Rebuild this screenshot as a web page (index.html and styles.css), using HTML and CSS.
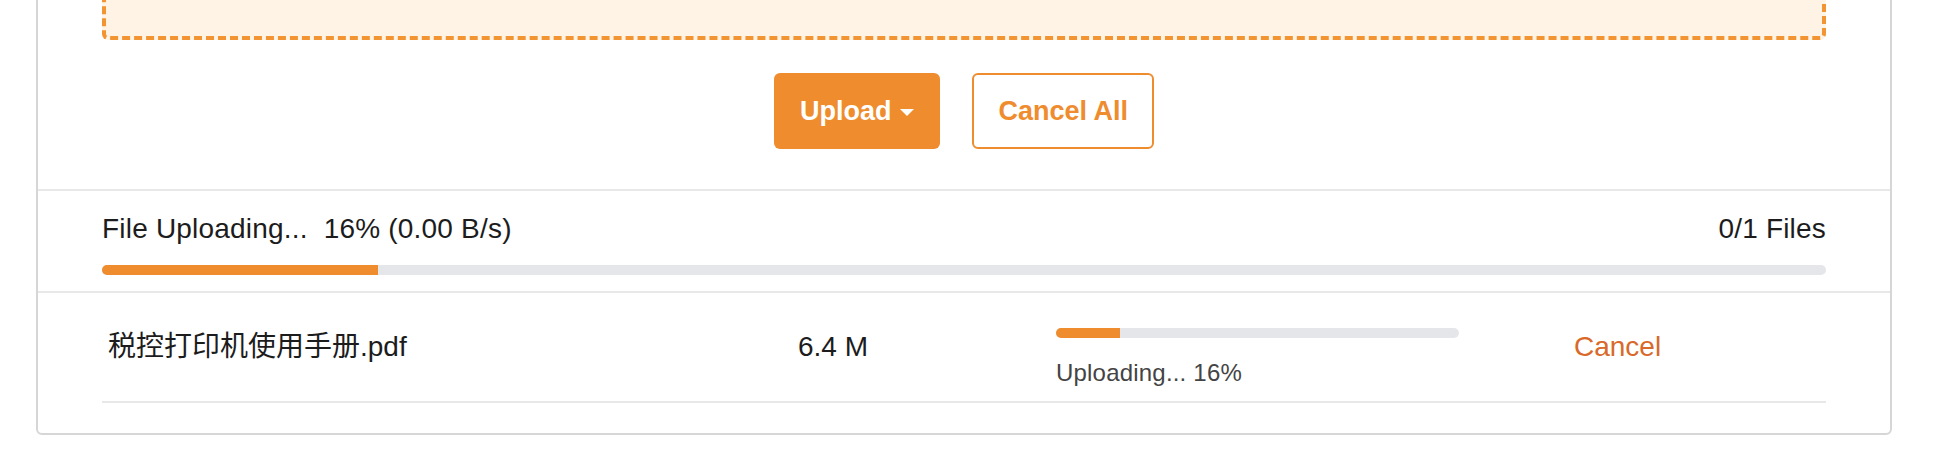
FILE: index.html
```html
<!DOCTYPE html>
<html lang="zh-CN">
<head>
<meta charset="utf-8">
<title>Upload</title>
<link rel="stylesheet" href="styles.css">
</head>
<body>
<div class="card">
  <div class="top">
    <div class="dropzone"></div>
    <div class="actions">
      <button class="btn btn-primary">Upload<span class="caret"></span></button>
      <button class="btn btn-outline">Cancel All</button>
    </div>
  </div>
  <div class="status">
    <div class="status-line">
      <span>File Uploading...&nbsp; 16% (0.00 B/s)</span>
      <span>0/1 Files</span>
    </div>
    <div class="bar bar-total"><div class="fill" style="width:16%"></div></div>
  </div>
  <div class="files">
    <div class="row">
      <div class="cell name">税控打印机使用手册.pdf</div>
      <div class="cell size">6.4 M</div>
      <div class="cell progress">
        <div class="bar bar-small"><div class="fill" style="width:16%"></div></div>
        <div class="progress-text">Uploading... 16%</div>
      </div>
      <div class="cell action"><a class="cancel">Cancel</a></div>
    </div>
  </div>
</div>
</body>
</html>
```
FILE: styles.css
```css
html, body {
  margin: 0;
  padding: 0;
  background: #ffffff;
  overflow: hidden;
}
body {
  font-family: "Liberation Sans", "Noto Sans CJK SC", Arial, sans-serif;
  color: #1c1c1c;
}
.card {
  margin: -100px 0 0 36px;
  width: 1856px;
  box-sizing: border-box;
  border: 2px solid #d6d6d6;
  border-radius: 6px;
  background: #fff;
}
.top {
  padding: 40px 64px 40px 64px;
}
.dropzone {
  height: 90px;
  background: #fff3e6;
  border: 4px dashed #f39433;
  border-radius: 6px;
}
.actions {
  display: flex;
  justify-content: center;
  gap: 32px;
  margin-top: 33px;
}
.btn {
  height: 76px;
  display: inline-flex;
  align-items: center;
  box-sizing: border-box;
  border-radius: 6px;
  font-family: "Liberation Sans", Arial, sans-serif;
  font-weight: bold;
  font-size: 27px;
  cursor: pointer;
}
.btn-primary {
  background: #ee8c2e;
  border: none;
  color: #fff;
  padding: 0 26px;
}
.caret {
  width: 0;
  height: 0;
  margin-left: 9px;
  margin-top: 3px;
  border-left: 7px solid transparent;
  border-right: 7px solid transparent;
  border-top: 7px solid #fff;
}
.btn-outline {
  background: #fff;
  border: 2px solid #ee8c2e;
  color: #ee8c2e;
  padding: 0 24px;
}
.status {
  border-top: 2px solid #e8e8e8;
  padding: 22px 64px 16px 64px;
}
.status-line {
  display: flex;
  justify-content: space-between;
  font-size: 28px;
  line-height: 32px;
  letter-spacing: 0.2px;
}
.bar {
  background: #e5e6ea;
  border-radius: 5px;
  height: 10px;
  overflow: hidden;
}
.bar-total {
  margin-top: 20px;
}
.fill {
  height: 100%;
  background: #ee8c2e;
}
.files {
  border-top: 2px solid #e8e8e8;
  padding: 0 64px 30px 64px;
}
.row {
  display: grid;
  grid-template-columns: 690px 258px 518px 1fr;
  height: 108px;
  align-items: center;
  border-bottom: 2px solid #e8e8e8;
}
.cell {
  padding: 0 6px;
  font-size: 28px;
  line-height: 32px;
}
.progress {
  align-self: start;
  margin-top: 35px;
}
.bar-small {
  width: 403px;
}
.progress-text {
  margin-top: 21px;
  font-size: 24px;
  line-height: 28px;
  letter-spacing: 0.2px;
  color: #444;
}
.cancel {
  color: #d9692a;
  cursor: pointer;
}
```
